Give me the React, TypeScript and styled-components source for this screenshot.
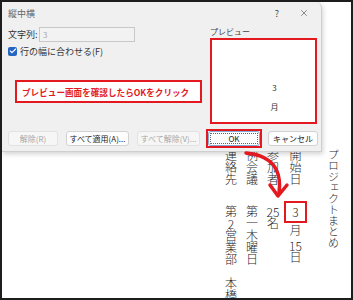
import styled, { createGlobalStyle } from 'styled-components';
import { Check, X } from 'lucide-react';

const red = '#e3191f';

const GlobalStyle = createGlobalStyle`
  html, body { margin: 0; padding: 0; background: #fff; }
  body { font-family: "Noto Sans CJK JP", "Noto Sans", sans-serif; }
`;

const Page = styled.div`
  position: relative;
  width: 353px;
  height: 300px;
  box-sizing: border-box;
  border: 2px solid #1d1d1d;
  background: #fff;
  overflow: hidden;
  display: flex;
  justify-content: flex-end;
`;

/* 縦書きの文書 */
const Doc = styled.div`
  writing-mode: vertical-rl;
  height: 100%;
  box-sizing: border-box;
  padding-top: 135px;
  padding-right: 7.5px;
  font-family: "Noto Sans CJK JP", sans-serif;
  font-weight: 300;
  font-size: 12px;
  color: #1f1f1f;
`;

const DocTitle = styled.div`
  font-size: 11px;
  line-height: 21px;
  padding-top: 12px;
  margin-left: 16px;
`;

const Line = styled.div`
  line-height: 21px;
  white-space: nowrap;
`;

const Label = styled.span`
  display: inline-block;
  inline-size: 48px;
  text-align: end;
  margin-bottom: 20px;
`;

const Value = styled.span<{ $spacing?: number }>`
  letter-spacing: ${p => p.$spacing ?? 0}px;
`;

const Tcy = styled.span`
  text-combine-upright: all;
`;

const Boxed = styled.span`
  display: inline-block;
  text-orientation: upright;
  line-height: 12px;
  padding: 3px 3.5px;
  border: 2px solid ${red};
  margin-top: -4px;
  margin-bottom: 1px;
  letter-spacing: 0;
`;

/* ダイアログ */
const Dialog = styled.div`
  position: absolute;
  left: 0;
  top: 0;
  width: 320px;
  height: 150px;
  box-sizing: border-box;
  background: #f0f0f0;
  border-right: 1px solid #cfcfcf;
  border-bottom: 1px solid #cfcfcf;
  border-top-right-radius: 6px;
  box-shadow: 1px 2px 5px rgba(0, 0, 0, 0.18);
  display: flex;
  flex-direction: column;
  font-size: 9px;
  color: #333;
`;

const TitleBar = styled.div`
  height: 22px;
  display: flex;
  align-items: center;
  padding: 0 12px 0 6px;
  color: #666;
`;

const TitleText = styled.div`
  flex: 1;
`;

const HelpMark = styled.span`
  margin-right: 20px;
  color: #444;
`;

const Body = styled.div`
  display: grid;
  grid-template-columns: 202px 107px;
  padding: 3px 5px 0 6px;
`;

const LeftCol = styled.div`
  display: flex;
  flex-direction: column;
`;

const FieldRow = styled.div`
  display: flex;
  align-items: center;
  height: 15px;
`;

const FieldLabel = styled.span`
  width: 31px;
`;

const TextInput = styled.div`
  width: 96px;
  height: 15px;
  box-sizing: border-box;
  border: 1px solid #c8c8c8;
  background: #f2f2f2;
  color: #a8a8a8;
  font-size: 8px;
  padding-left: 3px;
  display: flex;
  align-items: center;
`;

const CheckRow = styled.div`
  display: flex;
  align-items: center;
  gap: 3px;
  margin-top: 4px;
  height: 10px;
`;

const CheckBox = styled.span`
  width: 9px;
  height: 9px;
  border-radius: 2px;
  background: #2466c2;
  display: flex;
  align-items: center;
  justify-content: center;
`;

const RightCol = styled.div`
  display: flex;
  flex-direction: column;
`;

const PreviewLabel = styled.div`
  font-size: 8px;
  line-height: 10px;
  margin-bottom: 1px;
  color: #444;
`;

const PreviewBox = styled.div`
  height: 86px;
  box-sizing: border-box;
  border: 2px solid ${red};
  background: #fff;
  display: flex;
  flex-direction: column;
  align-items: center;
  gap: 10px;
  padding: 43px 0 0 22px;
  font-size: 8px;
  line-height: 9px;
  color: #333;
`;

const ButtonRow = styled.div`
  display: flex;
  align-items: center;
  gap: 8px;
  margin-top: 7px;
  padding-left: 6px;
`;

const Button = styled.button<{ $w: number; $disabled?: boolean; $default?: boolean }>`
  width: ${p => p.$w}px;
  height: 15px;
  padding: 0;
  box-sizing: border-box;
  border-radius: 3px;
  border: 1px solid ${p => (p.$default ? '#7fa9d6' : p.$disabled ? '#e2e2e2' : '#d2d2d2')};
  background: ${p => (p.$disabled ? '#f6f6f6' : '#fdfdfd')};
  color: ${p => (p.$disabled ? '#a6a6a6' : '#222')};
  font-family: inherit;
  font-size: 8px;
  outline: ${p => (p.$default ? '1px dotted #666' : 'none')};
  outline-offset: -3px;
`;

const OkFrame = styled.span`
  display: inline-flex;
  border: 2px solid ${red};
  margin: -2px;
`;

/* 注釈 */
const Callout = styled.div`
  position: absolute;
  left: 13px;
  top: 78px;
  width: 187px;
  height: 23px;
  box-sizing: border-box;
  border: 2px solid ${red};
  background: #fff;
  color: ${red};
  font-weight: 700;
  font-size: 8.6px;
  padding-left: 5px;
  display: flex;
  align-items: center;
  white-space: nowrap;
`;

const Arrow = styled.svg`
  position: absolute;
  left: 236px;
  top: 146px;
  width: 60px;
  height: 60px;
`;

export default function App() {
  return (
    <>
      <GlobalStyle />
      <Page>
        <Doc>
          <DocTitle>プロジェクトまとめ</DocTitle>
          <Line>
            <Label>開始日</Label>
            <Value $spacing={3}><Boxed>3</Boxed>月<Tcy>15</Tcy>日</Value>
          </Line>
          <Line>
            <Label>参加者</Label>
            <Value $spacing={1}><Tcy>25</Tcy>名</Value>
          </Line>
          <Line>
            <Label>定例会議</Label>
            <Value>第一木曜日</Value>
          </Line>
          <Line>
            <Label>連絡先</Label>
            <Value>第<Tcy>2</Tcy>営業部　本橋</Value>
          </Line>
        </Doc>

        <Dialog>
          <TitleBar>
            <TitleText>縦中横</TitleText>
            <HelpMark>?</HelpMark>
            <X size={10} strokeWidth={1.4} color="#444" />
          </TitleBar>
          <Body>
            <LeftCol>
              <FieldRow>
                <FieldLabel>文字列:</FieldLabel>
                <TextInput>3</TextInput>
              </FieldRow>
              <CheckRow>
                <CheckBox><Check size={8} strokeWidth={3.5} color="#fff" /></CheckBox>
                <span>行の幅に合わせる(F)</span>
              </CheckRow>
            </LeftCol>
            <RightCol>
              <PreviewLabel>プレビュー</PreviewLabel>
              <PreviewBox>
                <span>3</span>
                <span>月</span>
              </PreviewBox>
            </RightCol>
          </Body>
          <ButtonRow>
            <Button $w={50} $disabled>解除(R)</Button>
            <Button $w={63}>すべて適用(A)...</Button>
            <Button $w={63} $disabled>すべて解除(V)...</Button>
            <OkFrame><Button $w={52} $default>OK</Button></OkFrame>
            <Button $w={50}>キャンセル</Button>
          </ButtonRow>
        </Dialog>

        <Callout>プレビュー画面を確認したらOKをクリック</Callout>

        <Arrow viewBox="0 0 60 60" fill="none" stroke={red} strokeWidth={3.5} strokeLinecap="round" strokeLinejoin="round">
          <path d="M8 5 Q30 7 38 21 Q43 31 41 45" />
          <path d="M32 37 L40 48 L49 37" />
        </Arrow>
      </Page>
    </>
  );
}
